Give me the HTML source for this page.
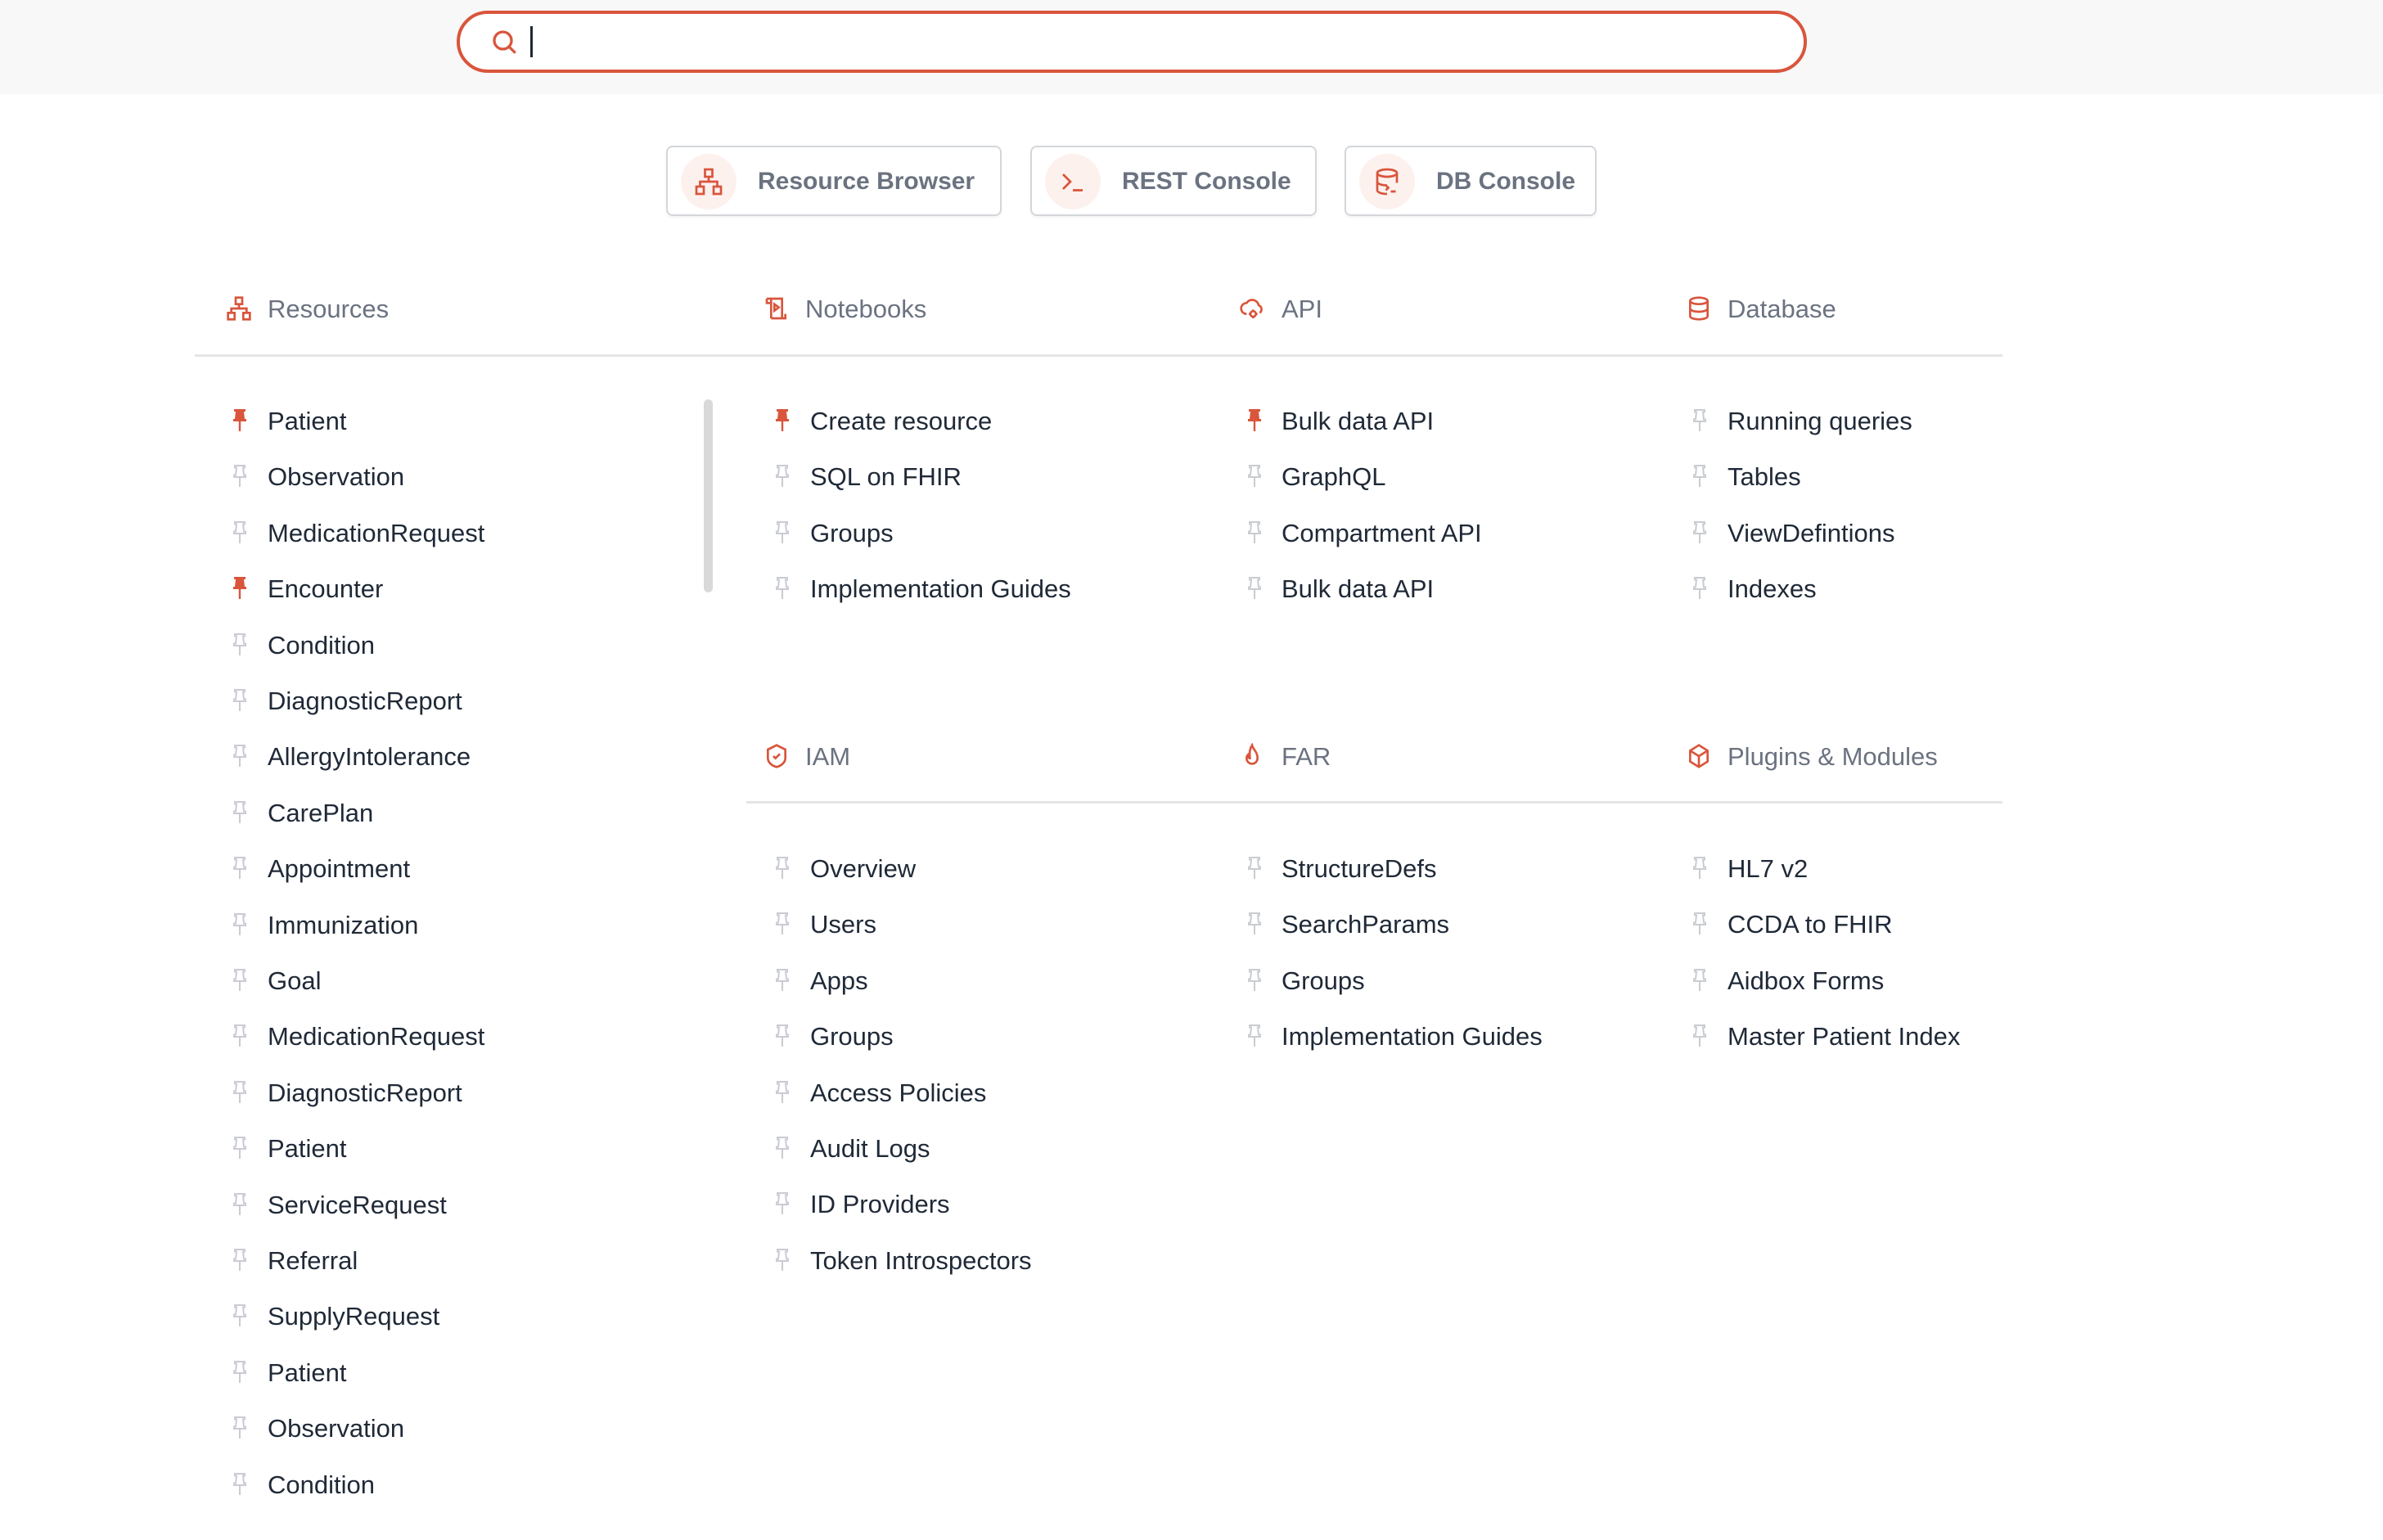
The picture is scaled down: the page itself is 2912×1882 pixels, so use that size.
<!DOCTYPE html>
<html><head><meta charset="utf-8"><style>
*{margin:0;padding:0;box-sizing:border-box}
body{width:2912px;height:1882px;background:#fff;font-family:"Liberation Sans",sans-serif;position:relative;overflow:hidden}
.top{position:absolute;left:0;top:0;width:2912px;height:115px;background:#f8f8f8}
.search{position:absolute;left:558px;top:13px;width:1650px;height:76px;border:4px solid #d9553c;border-radius:38px;background:#fff}
.cursor{position:absolute;left:648px;top:32px;width:3px;height:38px;background:#1f2937}
.btn{position:absolute;top:178px;height:86px;border:2px solid #d4d6da;border-radius:8px;background:#fff;box-shadow:0 2px 3px rgba(0,0,0,.05)}
.btn .c{position:absolute;left:16px;top:8px;width:68px;height:68px;border-radius:50%;background:#fdf1ee}
.btn .c svg{position:absolute;left:16px;top:16px}
.btn span{position:absolute;left:110px;top:25px;font-size:30px;font-weight:bold;color:#6b7280;white-space:nowrap}
.hd{position:absolute;font-size:31px;color:#6b7280;white-space:nowrap}
.hi{position:absolute}
.line{position:absolute;height:3px;background:#e5e5e5}
.it{position:absolute;font-size:31px;color:#1f2937;white-space:nowrap;line-height:36px}
.pin{position:absolute}
.sb{position:absolute;left:860px;top:488px;width:11px;height:236px;border-radius:6px;background:#d9d9d9}
</style></head><body>
<div class="top"></div>
<div class="search"></div>
<svg style="position:absolute;left:598px;top:33px" width="36" height="36" viewBox="0 0 24 24" fill="none" stroke="#d9553c" stroke-width="2.2" stroke-linecap="round"><circle cx="11" cy="11" r="7"/><path d="M16 16l4.5 4.5"/></svg>
<div class="cursor"></div>

<div class="btn" style="left:814px;width:410px"><div class="c"><svg width="36" height="36" viewBox="0 0 24 24" fill="none" stroke="#d9553c" stroke-width="1.8"><rect x="9" y="2" width="6" height="6"/><rect x="2" y="16" width="6" height="6"/><rect x="16" y="16" width="6" height="6"/><path d="M12 8v4M5 16v-4h14v4"/></svg></div><span>Resource Browser</span></div>
<div class="btn" style="left:1259px;width:350px"><div class="c"><svg width="36" height="36" viewBox="0 0 24 24" fill="none" stroke="#d9553c" stroke-width="1.8"><path d="M4 6l6 6-6 6M12 19h8"/></svg></div><span>REST Console</span></div>
<div class="btn" style="left:1643px;width:308px"><div class="c"><svg width="36" height="36" viewBox="0 0 24 24" fill="none" stroke="#d9553c" stroke-width="1.8"><ellipse cx="12" cy="5" rx="8" ry="3"/><path d="M4 5v14c0 1.7 3.6 3 8 3M20 5v8M4 12c0 1.7 3.6 3 8 3M11 15l2 2-2 2M15 20h4"/></svg></div><span>DB Console</span></div>

<svg class="hi" style="left:276px;top:361px" width="32" height="32" viewBox="0 0 24 24" fill="none" stroke="#d9553c" stroke-width="2"><rect x="9" y="2" width="6" height="6"/><rect x="2" y="16" width="6" height="6"/><rect x="16" y="16" width="6" height="6"/><path d="M12 8v4M5 16v-4h14v4"/></svg>
<div class="hd" style="left:327px;top:360px">Resources</div>
<svg class="hi" style="left:933px;top:361px" width="32" height="32" viewBox="0 0 24 24" fill="none" stroke="#d9553c" stroke-width="2"><path d="M3 3h14v18H7M3 3v4h4M7 3v18M20 17v4H7M10 8l4 3-4 3z"/></svg>
<div class="hd" style="left:984px;top:360px">Notebooks</div>
<svg class="hi" style="left:1514px;top:361px" width="32" height="32" viewBox="0 0 24 24" fill="none" stroke="#d9553c" stroke-width="2"><path d="M7 17a5 5 0 0 1 0-10 6 6 0 0 1 11 2 4 4 0 0 1 1 7"/><circle cx="13" cy="17" r="2.5"/><path d="M13 13v1.5M13 19.5V21M9 17h1.5M15.5 17H17"/></svg>
<div class="hd" style="left:1566px;top:360px">API</div>
<svg class="hi" style="left:2060px;top:361px" width="32" height="32" viewBox="0 0 24 24" fill="none" stroke="#d9553c" stroke-width="2"><ellipse cx="12" cy="5" rx="8" ry="3"/><path d="M4 5v14c0 1.7 3.6 3 8 3s8-1.3 8-3V5M4 12c0 1.7 3.6 3 8 3s8-1.3 8-3"/></svg>
<div class="hd" style="left:2111px;top:360px">Database</div>
<div class="line" style="left:238px;top:433px;width:2209px"></div>

<svg class="hi" style="left:933px;top:908px" width="32" height="32" viewBox="0 0 24 24" fill="none" stroke="#d9553c" stroke-width="2"><path d="M12 2l8 4v8c0 4-4 7-8 8-4-1-8-4-8-8V6z"/><path d="M9 12l2 2 4-4"/></svg>
<div class="hd" style="left:984px;top:907px">IAM</div>
<svg class="hi" style="left:1514px;top:908px" width="32" height="32" viewBox="0 0 24 24" fill="none" stroke="#d9553c" stroke-width="2"><path d="M12 2c1 4 5 6 5 12a5 5 0 0 1-10 0c0-2 1-3 1-3 0 2 1 3 2 3 0-4-1-7 2-12z"/></svg>
<div class="hd" style="left:1566px;top:907px">FAR</div>
<svg class="hi" style="left:2060px;top:908px" width="32" height="32" viewBox="0 0 24 24" fill="none" stroke="#d9553c" stroke-width="2"><path d="M12 2l8 5v10l-8 5-8-5V7z"/><path d="M4 7l8 5 8-5M12 12v10"/></svg>
<div class="hd" style="left:2111px;top:907px">Plugins &amp; Modules</div>
<div class="line" style="left:912px;top:979px;width:1535px"></div>

<div class="sb"></div>

<svg width="0" height="0" style="position:absolute"><defs>
<g id="pf"><path d="M3 1h14v3h-2l1 9h2v3H2v-3h2l1-9H3z" fill="#d9553c"/><path d="M10 16v12" stroke="#d9553c" stroke-width="2.4"/></g>
<g id="po" fill="none" stroke="#c9ccd2" stroke-width="2"><path d="M4 2h12v2.5h-2l1 9h2v2.5H3v-2.5h2l1-9H4z"/><path d="M10 16v12"/></g>
</defs></svg>

<div id="lists"></div>
<script>
function col(x,ix,y0,items){var h='';items.forEach(function(it,i){var y=y0+i*68.4;h+='<svg class="pin" style="left:'+ix+'px;top:'+(y-13)+'px" width="20" height="30" viewBox="0 0 20 30"><use href="#'+(it[1]?'pf':'po')+'"/></svg><div class="it" style="left:'+x+'px;top:'+(y-15)+'px">'+it[0]+'</div>';});return h;}
function L(a,p){return a.map(function(s,i){return [s,p&&p.indexOf(i)>=0];});}
var h='';
h+=col(327,283,512,L(["Patient","Observation","MedicationRequest","Encounter","Condition","DiagnosticReport","AllergyIntolerance","CarePlan","Appointment","Immunization","Goal","MedicationRequest","DiagnosticReport","Patient","ServiceRequest","Referral","SupplyRequest","Patient","Observation","Condition"],[0,3]));
h+=col(990,946,512,L(["Create resource","SQL on FHIR","Groups","Implementation Guides"],[0]));
h+=col(1566,1523,512,L(["Bulk data API","GraphQL","Compartment API","Bulk data API"],[0]));
h+=col(2111,2067,512,L(["Running queries","Tables","ViewDefintions","Indexes"]));
h+=col(990,946,1059,L(["Overview","Users","Apps","Groups","Access Policies","Audit Logs","ID Providers","Token Introspectors"]));
h+=col(1566,1523,1059,L(["StructureDefs","SearchParams","Groups","Implementation Guides"]));
h+=col(2111,2067,1059,L(["HL7 v2","CCDA to FHIR","Aidbox Forms","Master Patient Index"]));
document.getElementById('lists').innerHTML=h;
</script>
</body></html>
